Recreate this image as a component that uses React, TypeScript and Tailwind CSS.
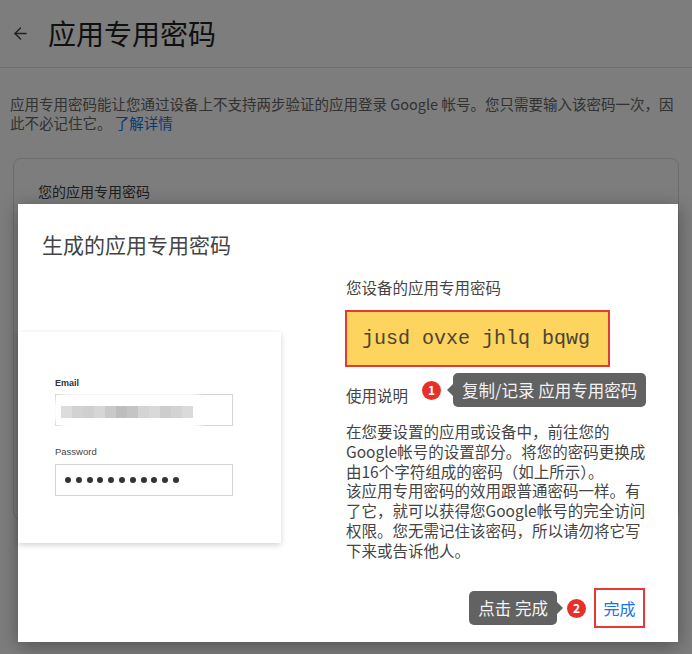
import { ArrowLeft } from "lucide-react";

const font = { fontFamily: '"Noto Sans CJK SC", "Noto Sans", sans-serif' };

const blocks = ["#dcdcdc", "#d2d2d2", "#cfcfcf", "#d6d6d6", "#c9c9c9", "#bdbdbd", "#c4c4c4", "#d4d4d4", "#d9d9d9", "#cdcdcd", "#d3d3d3", "#dadada"];

const Badge = ({ n }: { n: string }) => (
  <div className="w-[19px] h-[19px] rounded-full bg-[#e8302b] text-white text-[12px] font-bold flex items-center justify-center leading-none">
    {n}
  </div>
);

const LoginCard = () => (
  <div className="w-[263px] h-[211px] bg-white shadow-[0_2px_6px_rgba(0,0,0,0.18)] pl-[37px] pt-[45px]">
    <div className="text-[9px] font-bold text-[#333] leading-[12px]" style={{ fontFamily: '"Liberation Sans", sans-serif' }}>
      Email
    </div>
    <div className="mt-[5px] w-[178px] h-[32px] border border-[#d4d4d4] relative">
      <div className="absolute -left-[4px] -top-[2px] w-[156px] h-[36px] rounded-full bg-white blur-[2px]" />
      <div className="absolute left-[5px] top-[11px] flex blur-[0.6px]">
        {blocks.map((c, i) => (
          <div key={i} className="w-[11px] h-[12px]" style={{ backgroundColor: c }} />
        ))}
      </div>
    </div>
    <div className="mt-[20px] text-[9.5px] text-[#444] leading-[12px]" style={{ fontFamily: '"Liberation Sans", sans-serif' }}>
      Password
    </div>
    <div className="mt-[6px] w-[178px] h-[32px] border border-[#d4d4d4] flex items-center pl-[9px] gap-[4.8px]">
      {Array.from({ length: 11 }).map((_, i) => (
        <div key={i} className="w-[6px] h-[6px] rounded-full bg-[#333]" />
      ))}
    </div>
  </div>
);

export default function App() {
  return (
    <div className="relative w-[692px] h-[654px] overflow-hidden bg-white" style={font}>
      {/* page behind */}
      <header className="h-[68px] flex items-center border-b border-[#e4e4e4] pl-[11px]">
        <ArrowLeft size={19} strokeWidth={1.8} className="text-[#444]" />
        <h1 className="ml-[18px] text-[28px] text-[#202124] leading-none -mt-[1px]">应用专用密码</h1>
      </header>
      <p className="px-[10px] pt-[26px] text-[14.5px] leading-[19px] text-[#666] whitespace-nowrap">
        应用专用密码能让您通过设备上不支持两步验证的应用登录 Google 帐号。您只需要输入该密码一次，因
        <br />
        此不必记住它。 <span className="text-[#1a73e8]">了解详情</span>
      </p>
      <section className="mx-[13px] mt-[26px] h-[362px] border border-[#dadce0] rounded-lg pl-[24px] pt-[22px]">
        <div className="text-[14px] text-[#3c4043]">您的应用专用密码</div>
      </section>

      {/* overlay */}
      <div className="absolute inset-0 bg-black/[0.51]" />

      {/* dialog */}
      <div className="absolute left-[18px] top-[204px] w-[660px] h-[438px] bg-white shadow-[0_4px_18px_rgba(0,0,0,0.35)] flex flex-col">
        <h2 className="pl-[24px] pt-[26px] text-[21px] leading-[28px] text-[#444]">生成的应用专用密码</h2>
        <div className="flex items-start">
          <div className="w-[328px] pt-[74px]">
            <LoginCard />
          </div>
          <div className="pt-[19px] text-[15.5px] text-[#444]">
            <div className="leading-[20px]">您设备的应用专用密码</div>
            <div className="mt-[13px] -ml-[1px] w-[265px] h-[57px] border-2 border-[#e53935] bg-[#fcd45e] flex items-center pl-[15px]">
              <span className="text-[20px] text-[#4a4436] whitespace-pre" style={{ fontFamily: '"Liberation Mono", monospace' }}>
                jusd ovxe jhlq bqwg
              </span>
            </div>
            <div className="relative mt-[18px] leading-[20px]">
              使用说明
              <div className="absolute left-[76px] -top-[12px] h-[34px] flex items-center">
                <Badge n="1" />
                <div className="ml-[6px] w-0 h-0 border-y-[6px] border-y-transparent border-r-[6px] border-r-[#626262]" />
                <div className="h-[34px] px-[9px] bg-[#626262] rounded-[5px] text-[16.5px] text-[#f3f3f3] flex items-center whitespace-nowrap">
                  复制/记录 应用专用密码
                </div>
              </div>
            </div>
            <p className="mt-[17px] leading-[19.8px] whitespace-nowrap">
              在您要设置的应用或设备中，前往您的
              <br />
              Google帐号的设置部分。将您的密码更换成
              <br />
              由16个字符组成的密码（如上所示）。
              <br />
              该应用专用密码的效用跟普通密码一样。有
              <br />
              了它，就可以获得您Google帐号的完全访问
              <br />
              权限。您无需记住该密码，所以请勿将它写
              <br />
              下来或告诉他人。
            </p>
          </div>
        </div>
        <div className="mt-auto mb-[14px] pr-[33px] flex items-center justify-end">
          <div className="h-[34px] px-[9px] bg-[#626262] rounded-[5px] text-[16.5px] text-[#f3f3f3] flex items-center whitespace-nowrap">
            点击 完成
          </div>
          <div className="w-0 h-0 border-y-[6px] border-y-transparent border-l-[6px] border-l-[#626262]" />
          <div className="ml-[4px]">
            <Badge n="2" />
          </div>
          <button className="ml-[8px] w-[51px] h-[40px] border-2 border-[#e53935] text-[16px] text-[#1a73e8] flex items-center justify-center">
            完成
          </button>
        </div>
      </div>
    </div>
  );
}
